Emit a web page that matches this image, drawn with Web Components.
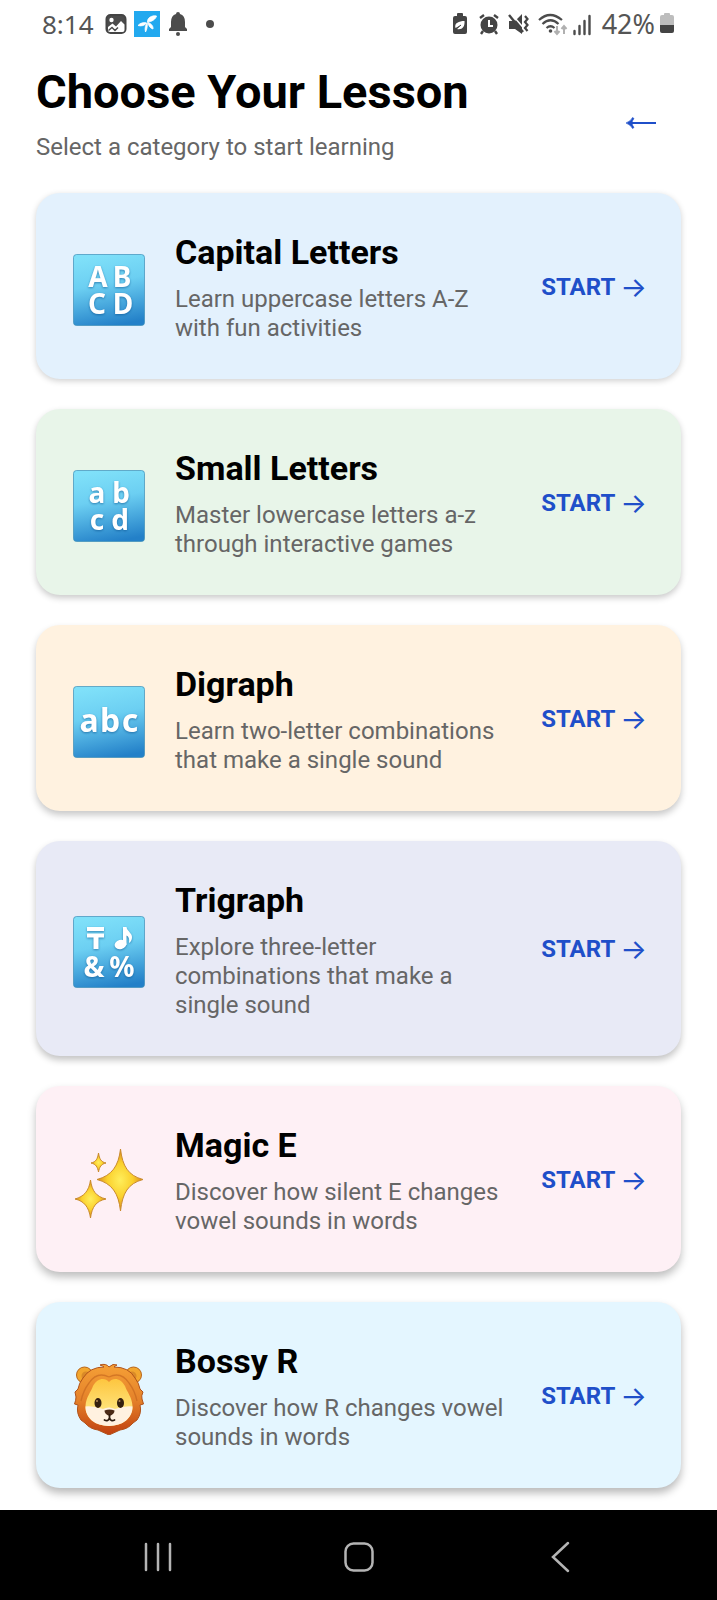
<!DOCTYPE html>
<html lang="en">
<head>
<meta charset="utf-8">
<meta name="viewport" content="width=device-width, initial-scale=1">
<title>Choose Your Lesson</title>
<style>
  body { margin: 0; background: #fff; font-family: Roboto, "Liberation Sans", sans-serif; }
</style>
</head>
<body>
<lesson-app></lesson-app>

<template id="t-app">
  <style>
    :host { display: flex; flex-direction: column; min-height: 100vh; }
    main { flex: 1; display: flex; flex-direction: column; gap: 30px; padding: 14px 36px 22px; overflow: hidden; }
  </style>
  <status-bar></status-bar>
  <main>
    <page-header>
      <span slot="title">Choose Your Lesson</span>
      <span slot="subtitle">Select a category to start learning</span>
    </page-header>
    <lesson-card style="--tint:#e3f1fd;--shadow:0 2px 6px rgba(0,0,0,.19)">
      <letter-tile slot="icon" kind="capital"></letter-tile>
      <span slot="title">Capital Letters</span>Learn uppercase letters A-Z with fun activities
    </lesson-card>
    <lesson-card style="--tint:#e8f5e9;--shadow:0 3px 6px rgba(0,0,0,.21)">
      <letter-tile slot="icon" kind="small"></letter-tile>
      <span slot="title">Small Letters</span>Master lowercase letters a-z through interactive games
    </lesson-card>
    <lesson-card style="--tint:#fff2e0;--shadow:0 4px 7px rgba(0,0,0,.22)">
      <letter-tile slot="icon" kind="word"></letter-tile>
      <span slot="title">Digraph</span>Learn two-letter combinations that make a single sound
    </lesson-card>
    <lesson-card style="--tint:#e8eaf6;--shadow:0 4px 7px rgba(0,0,0,.24)">
      <letter-tile slot="icon" kind="symbols"></letter-tile>
      <span slot="title">Trigraph</span>Explore three-letter combinations that make a single sound
    </lesson-card>
    <lesson-card style="--tint:#fef0f5;--shadow:0 5px 8px rgba(0,0,0,.26)">
      <sparkles-icon slot="icon"></sparkles-icon>
      <span slot="title">Magic E</span>Discover how silent E changes vowel sounds in words
    </lesson-card>
    <lesson-card style="--tint:#e4f6ff;--shadow:0 5px 8px rgba(0,0,0,.28)">
      <lion-icon slot="icon"></lion-icon>
      <span slot="title">Bossy R</span>Discover how R changes vowel sounds in words
    </lesson-card>
  </main>
  <nav-bar></nav-bar>
</template>

<template id="t-status">
  <style>
    :host { display: flex; align-items: center; justify-content: space-between; height: 48px; padding: 0 42px; color: #555; font: 400 26px/48px "Noto Sans", sans-serif; }
    div { display: flex; align-items: center; }
    .left { gap: 6px; }
    .time { margin-right: 4px; }
    .right { gap: 4px; }
    .level { display: flex; align-items: center; gap: 4px; margin-left: 6px; font-size: 27px; }
    svg { display: block; flex: none; }
  </style>
  <div class="left">
    <span class="time">8:14</span>
    <svg width="24" height="24" viewBox="0 0 24 24"><rect x="2.500" y="3" width="19" height="18" rx="4" fill="#4c4c4c" stroke="#444" stroke-width="2"/><circle cx="7.500" cy="8" r="2.200" fill="#fff"/><path d="M4 18 V15 L8.500 11.500 L12 14.500 L17 9 L20.500 12.500 V18 Q20.500 20 18.500 20 H6 Q4 20 4 18Z" fill="#fff"/><path d="M4.500 18.500 L8 15.500 L11 18.500 L14 15.500" fill="none" stroke="#4c4c4c" stroke-width="1.500"/></svg>
    <svg width="26" height="26" viewBox="0 0 26 26"><rect width="26" height="26" fill="#22a9ef"/><path d="M13.500 11 C13 7 18 4 22.500 5 C22 8 17.500 11 13.500 11Z M12.500 12 C10 11 6 12 4 14.500 C7 15.500 11 14.500 12.500 12Z M14 11.500 C17 12.500 19.500 15 19 18 C16.500 17.500 14.500 15 14 11.500Z M13.300 11.500 C11.500 14 10.500 17 11.500 21 C13 18.500 13.500 15 13.300 11.500Z" fill="#fff" stroke="#fff" stroke-width=".8"/></svg>
    <svg width="22" height="26" viewBox="0 0 22 26"><path d="M12 1 Q14 1 14 3 Q19 4.500 19 11 V16 L21 18 V20 H3 V18 L5 16 V11 Q5 4.500 10 3 Q10 1 12 1Z" fill="#4c4c4c"/><circle cx="12" cy="23" r="2" fill="#4c4c4c"/></svg>
    <svg width="28" height="26" viewBox="0 0 28 26"><circle cx="16" cy="13" r="4" fill="#4c4c4c"/></svg>
  </div>
  <div class="right">
    <svg width="22" height="24" viewBox="0 0 22 24"><path d="M6 2 Q6 1 7 1 H11 Q12 1 12 2 V4 H14 Q16 4 16 6 V20 Q16 22 14 22 H4 Q2 22 2 20 V6 Q2 4 4 4 H6Z" fill="#444"/><path d="M4.500 16 C3 11 8 9 13.500 9 C14 15 11 18 6 17 L10 13" fill="#fff"/><path d="M5 17 L10 13" stroke="#444"/></svg>
    <svg width="26" height="24" viewBox="0 0 26 24"><circle cx="12" cy="13" r="8.500" fill="#444"/><path d="M3 6 L7 3 M21 6 L17 3 M6 19 L4 22 M18 19 L20 22" stroke="#444" stroke-width="2.400"/><path d="M12 8 V14 H16" fill="none" stroke="#fff" stroke-width="2"/></svg>
    <svg width="26" height="24" viewBox="0 0 26 24"><path d="M2 9 H8 L15 2 V22 L8 17 H2Z" fill="#444"/><path d="M5 2.500 L17 16.500" stroke="#fff" stroke-width="1.500"/><path d="M2 3 L16 20" stroke="#444" stroke-width="2.400"/><path d="M18 4 l2.500 3 l-2.500 3 l2.500 3 l-2.500 3 l2.500 3" fill="none" stroke="#444" stroke-width="2.200"/></svg>
    <svg width="31" height="24" viewBox="0 0 31 24"><path d="M2 8 Q13 -2 25 8 M5.500 12 Q13.500 4.500 21.500 12 M9.500 16 Q13.500 12.500 17.500 16" fill="none" stroke="#4c4c4c" stroke-width="2.200"/><circle cx="13.500" cy="19" r="1.800" fill="#4c4c4c"/><path d="M20 14 V21 M17.500 19 L20 22 L22.500 19 M27 22 V14 M24.500 17 L27 14 L29.500 17" fill="none" stroke="#b0b0b0" stroke-width="2"/></svg>
    <svg width="20" height="24" viewBox="0 0 20 24"><path d="M2.500 22 V19 M7.500 22 V14 M12.500 22 V9 M17.500 22 V4" stroke="#4c4c4c" stroke-width="2.400" stroke-linecap="round"/></svg>
    <span class="level">42%<svg width="16" height="24" viewBox="0 0 16 24"><path d="M5 3 V2 Q5 1 6 1 H10 Q11 1 11 2 V3 H13 Q15 3 15 5 V14 H1 V5 Q1 3 3 3Z" fill="#bdbdbd"/><path d="M1 13 H15 V19 Q15 21 13 21 H3 Q1 21 1 19Z" fill="#444"/></svg></span>
  </div>
</template>

<template id="t-header">
  <style>
    :host { display: flex; align-items: center; justify-content: space-between; height: 101px; }
    h1 { margin: 0; font-size: 47px; line-height: 58px; font-weight: 700; color: #000; }
    p { margin: 12px 0 0; font-size: 24px; line-height: 29px; color: #666; }
    button { border: 0; background: none; padding: 20px 24px 0; color: #1f4fc9; }
    svg { display: block; }
  </style>
  <div>
    <h1><slot name="title"></slot></h1>
    <p><slot name="subtitle"></slot></p>
  </div>
  <button type="button" aria-label="Back"><svg width="32" height="20" viewBox="0 0 32 20"><path d="M5 10 H31" stroke="currentColor" stroke-width="2"/><path d="M1 10 Q6 8 7.500 4.500 L9 5.500 Q7 8 7 10 Q7 12 9 14.500 L7.500 15.500 Q6 12 1 10Z" fill="currentColor" stroke="currentColor" stroke-width=".6"/></svg></button>
</template>

<template id="t-card">
  <style>
    :host { display: flex; align-items: center; padding: 36px 34px 36px 37px; border-radius: 24px; background: var(--tint); box-shadow: var(--shadow); }
    .icon { flex: none; width: 72px; height: 72px; padding-top: 7px; margin-right: 30px; }
    .text { flex: 1; min-width: 0; }
    h2 { margin: 0 0 10px; font-size: 34px; line-height: 46px; font-weight: 700; color: #000; }
    p { margin: 0; font-size: 24px; line-height: 29px; color: #666; }
    a { flex: none; display: flex; align-items: center; gap: 5px; margin-left: 26px; padding-top: 2px; font-size: 24px; line-height: 29px; font-weight: 700; color: #1f4fc9; text-decoration: none; white-space: nowrap; }
    .arrow { font-family: Inter, sans-serif; font-size: 28px; font-weight: 400; }
  </style>
  <div class="icon"><slot name="icon"></slot></div>
  <div class="text"><h2><slot name="title"></slot></h2><p><slot></slot></p></div>
  <a href="#start">START <span class="arrow">→</span></a>
</template>

<template id="t-tile">
  <style>
    :host { display: block; width: 72px; height: 72px; }
    svg { display: block; }
    text { font-family: "Noto Sans", sans-serif; font-weight: 700; text-anchor: middle; }
    .f28 { font-size: 28px; }
    .f32 { font-size: 32px; }
    g { fill: #fff; filter: drop-shadow(0 1px 1px rgba(10,80,140,.6)); }
  </style>
  <svg width="72" height="72" viewBox="0 0 72 72" aria-hidden="true">
    <defs><linearGradient id="bg" x1="0.400" y1="0" x2="0.600" y2="1"><stop offset="0" stop-color="#7fe0f9"/><stop offset=".4" stop-color="#6ccff2"/><stop offset="1" stop-color="#2380c8"/></linearGradient></defs>
    <rect x=".5" y=".5" width="71" height="71" rx="3" fill="url(#bg)" stroke="#3d8fb8" stroke-opacity=".7"/>
    <g data-kind="capital" class="f28"><text x="25" y="33">A</text><text x="49" y="33">B</text><text x="24" y="60">C</text><text x="50" y="60">D</text></g>
    <g data-kind="small" class="f28"><text x="24" y="33">a</text><text x="48" y="33">b</text><text x="24" y="60">c</text><text x="47" y="60">d</text></g>
    <g data-kind="word" class="f32"><text x="16" y="46">a</text><text x="37" y="46">b</text><text x="57" y="46">c</text></g>
    <g data-kind="symbols" class="f28"><path d="M14 11 H31 V15 H14Z M14 17.500 H31 V21.500 H25.500 V33 H20.500 V21.500 H14Z"/><ellipse cx="47.500" cy="28.500" rx="6" ry="4.600" transform="rotate(-15 47.500 28.500)"/><path d="M50 29 V11 H53.500 C54 15 59 17 59 21 Q59 25 56 27 Q57 21 53.500 19.500 V29Z"/><text x="21" y="61">&amp;</text><text x="49" y="61">%</text></g>
  </svg>
</template>

<template id="t-sparkles">
  <style>:host { display: block; } svg { display: block; }</style>
  <svg width="72" height="72" viewBox="0 0 72 72" aria-hidden="true">
    <defs><radialGradient id="s"><stop offset="0" stop-color="#ffee5c"/><stop offset=".55" stop-color="#fbd02c"/><stop offset="1" stop-color="#d98a1c"/></radialGradient></defs>
    <g fill="url(#s)" stroke="#c98a2c" stroke-linejoin="round">
      <path d="M47.500 2 C49.500 19 55 28.500 70 32.500 C55 36.500 49.500 46 47.500 64 C45.500 46 39 36.500 24 32.500 C39 28.500 45.500 19 47.500 2Z"/>
      <path d="M17.500 33 C19 44 23 49.500 33 52 C23 54 19 60 17.500 71 C16 60 11 54 2 52 C11 49.500 16 44 17.500 33Z"/>
      <path d="M25.500 6 C26.500 12 28 15 33 16 C28 17 26.500 20 25.500 25 C24.500 20 23 17 18 16 C23 15 24.500 12 25.500 6Z"/>
    </g>
  </svg>
</template>

<template id="t-lion">
  <style>:host { display: block; } svg { display: block; }</style>
  <svg width="72" height="72" viewBox="0 0 72 72" aria-hidden="true">
    <defs>
      <linearGradient id="m" x1="0" y1="0" x2="0" y2="1"><stop offset="0" stop-color="#f5a036"/><stop offset=".5" stop-color="#e5822a"/><stop offset="1" stop-color="#c0400f"/></linearGradient>
      <linearGradient id="f" x1="0" y1="0" x2="0" y2="1"><stop offset=".2" stop-color="#fdc43c"/><stop offset=".7" stop-color="#ffe680"/></linearGradient>
      <clipPath id="c"><path d="M36 19 C40 14 48 15 52 23 C54 29 59 34 59.500 43 C60 55 50 63 36 63 C22 63 12 55 12.500 43 C13 34 18 29 20 23 C24 15 32 14 36 19Z"/></clipPath>
    </defs>
    <g fill="#f2a62e" stroke="#b8651b"><circle cx="11.500" cy="12" r="8"/><circle cx="60.500" cy="12" r="8"/></g>
    <circle cx="13" cy="13" r="4.500" fill="#d98a28"/><circle cx="59" cy="13" r="4.500" fill="#d98a28"/>
    <path d="M27 2 Q33 0 36 4 Q40 0 44 2 Q42 3 41 4 Q56 4 62 15 Q66 20 67 26 L70 29 Q68 33 69 36 L70.500 41 L67 42 Q69 50 64 57 L60 60 Q55 66 47 67 L36 72 L25 67 Q17 66 12 60 L8 57 Q3 50 5 42 L1.500 41 Q3 37 3 34 L2 29 L5 26 Q6 20 10 15 Q17 4 31 4 Q30 3 27 2Z" fill="url(#m)" stroke="#b0521a" stroke-linejoin="round"/>
    <path d="M36 14 Q24 8 16 20 Q10 28 8 38 M36 14 Q48 8 56 20 Q62 28 64 38" fill="none" stroke="#c2631c" stroke-opacity=".6" stroke-width="1.300"/>
    <g clip-path="url(#c)"><rect width="72" height="72" fill="url(#f)"/><path d="M8 44 Q20 42 30 46 Q36 43 42 46 Q52 42 64 44 V72 H8Z" fill="#fff1e0"/></g>
    <ellipse cx="25" cy="40" rx="3.500" ry="5" fill="#35200f"/><ellipse cx="47.500" cy="40" rx="3.500" ry="5" fill="#35200f"/><circle cx="24" cy="38" r="1" fill="#b58a5c"/><circle cx="46.500" cy="38" r="1" fill="#b58a5c"/>
    <path d="M31.500 47.500 Q36.500 45.500 41.500 47.500 Q41.500 51 36.500 53 Q31.500 51 31.500 47.500Z" fill="#4a2a16"/>
    <path d="M36.500 52 V55 M31.500 57 Q35 59 36.500 55 Q38 59 41.500 57" fill="none" stroke="#2c1a0e" stroke-width="1.800" stroke-linecap="round"/>
  </svg>
</template>

<template id="t-nav">
  <style>
    :host { display: flex; align-items: center; justify-content: center; height: 90px; background: #000; }
    button { flex: 0 1 28%; height: 66px; display: flex; align-items: center; justify-content: center; border: 0; padding: 4px 0 0; background: none; }
    svg { fill: none; stroke: #b4b4b4; stroke-width: 2.500; stroke-linecap: round; }
  </style>
  <button type="button" aria-label="Recent apps"><svg width="32" height="32" viewBox="0 0 32 32"><path d="M4 3 V29 M16 3 V29 M28 3 V29"/></svg></button>
  <button type="button" aria-label="Home"><svg width="32" height="32" viewBox="0 0 32 32"><rect x="2.500" y="2.500" width="27" height="27" rx="8"/></svg></button>
  <button type="button" aria-label="Back"><svg width="32" height="32" viewBox="0 0 32 32"><path d="M25 2 L10 16 L25 30"/></svg></button>
</template>

<script>
  class TemplateElement extends HTMLElement {
    constructor() {
      super();
      const template = document.getElementById(this.constructor.template);
      this.attachShadow({ mode: "open" }).append(template.content.cloneNode(true));
    }
  }
  class LetterTile extends TemplateElement {
    static template = "t-tile";
    connectedCallback() {
      const kind = this.getAttribute("kind");
      for (const group of this.shadowRoot.querySelectorAll("g[data-kind]")) {
        if (group.dataset.kind !== kind) group.remove();
      }
    }
  }
  const define = (name, id) => customElements.define(name, class extends TemplateElement {
    static template = id;
  });
  define("status-bar", "t-status");
  define("page-header", "t-header");
  customElements.define("letter-tile", LetterTile);
  define("sparkles-icon", "t-sparkles");
  define("lion-icon", "t-lion");
  define("lesson-card", "t-card");
  define("nav-bar", "t-nav");
  define("lesson-app", "t-app");
</script>
</body>
</html>
